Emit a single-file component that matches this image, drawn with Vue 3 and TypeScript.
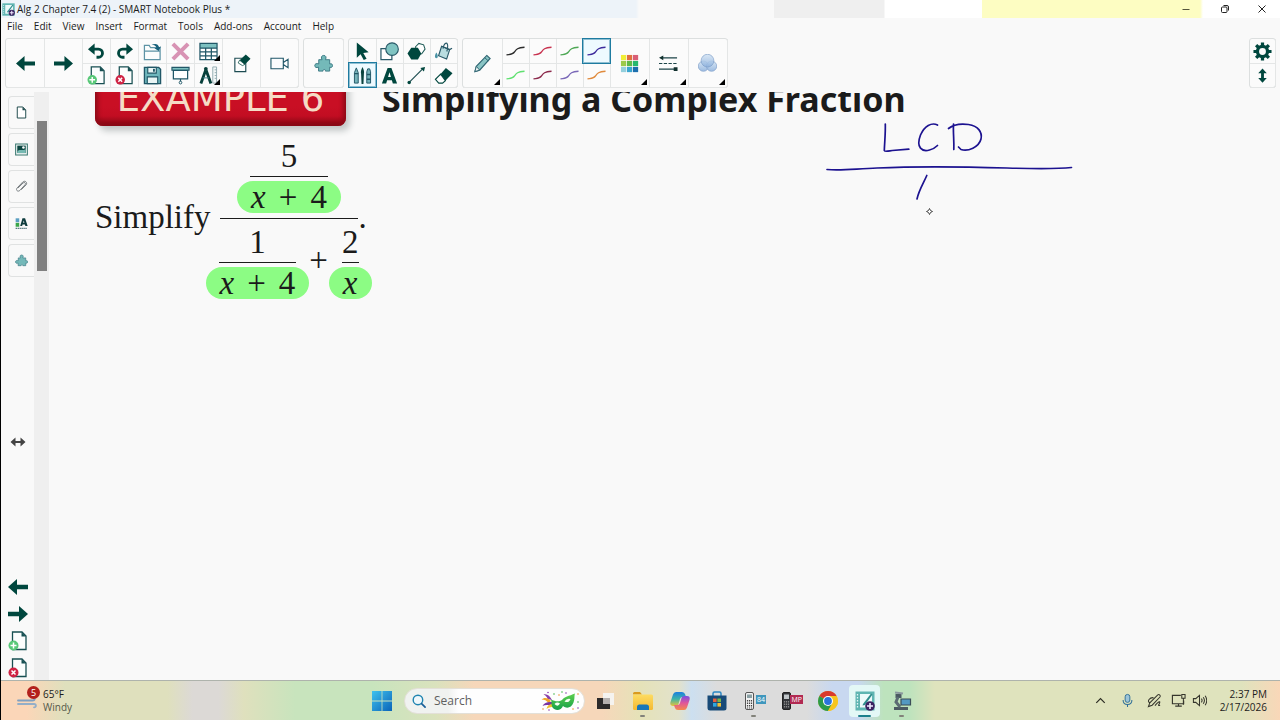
<script setup lang="ts">
import { ref } from 'vue'

interface Tool {
  icon: string
  label: string
  more?: boolean
  active?: boolean
}
interface Line {
  color: string
  label: string
  active?: boolean
}
interface TaskApp {
  icon: string
  label: string
  state?: string
  tag?: string
  tagColor?: string
}

const menus: string[] = ['File', 'Edit', 'View', 'Insert', 'Format', 'Tools', 'Add-ons', 'Account', 'Help']

const pageTools: Tool[] = [
  { icon: 'undo', label: 'Undo' },
  { icon: 'redo', label: 'Redo' },
  { icon: 'open', label: 'Open' },
  { icon: 'delete', label: 'Delete' },
  { icon: 'table', label: 'Insert table', more: true },
  { icon: 'page-add', label: 'Add page' },
  { icon: 'page-remove', label: 'Delete page' },
  { icon: 'save', label: 'Save' },
  { icon: 'screen', label: 'Screen shade' },
  { icon: 'measure', label: 'Measurement tools', more: true },
]

const drawTools: Tool[] = [
  { icon: 'select', label: 'Select' },
  { icon: 'shapes', label: 'Shapes' },
  { icon: 'polygon', label: 'Regular polygons' },
  { icon: 'fill', label: 'Fill' },
  { icon: 'pens', label: 'Pens', active: true },
  { icon: 'text', label: 'Text' },
  { icon: 'line', label: 'Lines' },
  { icon: 'eraser', label: 'Eraser' },
]

const lines: Line[] = [
  { color: '#2b2b2b', label: 'Black pen' },
  { color: '#c8324f', label: 'Red pen' },
  { color: '#4fa856', label: 'Green pen' },
  { color: '#3d2b9c', label: 'Blue pen', active: true },
  { color: '#5fe070', label: 'Light green highlighter' },
  { color: '#8c2a4c', label: 'Maroon pen' },
  { color: '#7a68b8', label: 'Purple pen' },
  { color: '#e08a3c', label: 'Orange pen' },
]

const styleTools: Tool[] = [
  { icon: 'palette', label: 'Color', more: true },
  { icon: 'linestyle', label: 'Line style', more: true },
  { icon: 'opacity', label: 'Transparency', more: true },
]

const sideTabs: Tool[] = [
  { icon: 'tab-page', label: 'Page sorter' },
  { icon: 'tab-gallery', label: 'Gallery' },
  { icon: 'tab-clip', label: 'Attachments' },
  { icon: 'tab-props', label: 'Properties' },
  { icon: 'puzzle', label: 'Add-ons' },
]

const pageNav: Tool[] = [
  { icon: 'prev', label: 'Previous page' },
  { icon: 'next', label: 'Next page' },
  { icon: 'page-add', label: 'Add page' },
  { icon: 'page-remove', label: 'Delete page' },
]

const apps: TaskApp[] = [
  { icon: 'taskview', label: 'Task view' },
  { icon: 'folder', label: 'File Explorer', state: 'open' },
  { icon: 'copilot', label: 'Copilot' },
  { icon: 'store', label: 'Microsoft Store' },
  { icon: 'calc84', label: 'Calculator 84', state: 'open', tag: '84', tagColor: '#3f97bd' },
  { icon: 'calcmp', label: 'Calculator MP', tag: 'MP', tagColor: '#b22a52' },
  { icon: 'chrome', label: 'Chrome' },
  { icon: 'notebook', label: 'SMART Notebook', state: 'front' },
  { icon: 'camera', label: 'Document camera', state: 'open' },
]

const tray: Tool[] = [
  { icon: 'chevron', label: 'Show hidden icons' },
  { icon: 'mic', label: 'Microphone' },
  { icon: 'stylus', label: 'Pen menu' },
  { icon: 'network', label: 'Network' },
  { icon: 'volume', label: 'Volume' },
]

const query = ref<string>('')
</script>

<template>
  <svg class="defs" aria-hidden="true">
    <defs>
      <linearGradient id="g-win" x1="0" y1="0" x2="1" y2="1">
        <stop offset="0" stop-color="#3fc3ee" /><stop offset="1" stop-color="#0a63b8" />
      </linearGradient>
      <linearGradient id="g-folder" x1="0" y1="0" x2="0" y2="1">
        <stop offset="0" stop-color="#fddc62" /><stop offset="1" stop-color="#f4b932" />
      </linearGradient>
      <linearGradient id="g-cop1" x1="0" y1="0" x2="0" y2="1">
        <stop offset="0" stop-color="#1b7fe0" /><stop offset=".5" stop-color="#3cb4a8" /><stop offset="1" stop-color="#e8c23a" />
      </linearGradient>
      <linearGradient id="g-cop2" x1="0" y1="0" x2="0" y2="1">
        <stop offset="0" stop-color="#7a4fe0" /><stop offset=".5" stop-color="#e0569a" /><stop offset="1" stop-color="#f58a4a" />
      </linearGradient>
      <linearGradient id="g-ball" x1="0" y1="0" x2="0" y2="1">
        <stop offset="0" stop-color="#d3e4f4" /><stop offset="1" stop-color="#8cb0dc" />
      </linearGradient>
      <linearGradient id="g-mask" x1="0" y1="0" x2="0" y2="1">
        <stop offset="0" stop-color="#5fd04e" /><stop offset="1" stop-color="#15a04a" />
      </linearGradient>
    </defs>

    <symbol id="prev" viewBox="0 0 20 20"><path d="M0 10 9 2v5.800h11v4.400H9V18z" fill="#00473e" /></symbol>
    <symbol id="next" viewBox="0 0 20 20"><path d="M20 10 11 2v5.800H0v4.400h11V18z" fill="#00473e" /></symbol>
    <symbol id="undo" viewBox="0 0 20 20">
      <path d="M6 7.500h6a4.300 4.300 0 0 1 0 8.600H10" fill="none" stroke="#00473e" stroke-width="3" />
      <path d="M1 7.500 8 1.500v12z" fill="#00473e" />
    </symbol>
    <symbol id="redo" viewBox="0 0 20 20">
      <path d="M14 7.500H8a4.300 4.300 0 0 0 0 8.600h2" fill="none" stroke="#00473e" stroke-width="3" />
      <path d="M19 7.500 12 1.500v12z" fill="#00473e" />
    </symbol>
    <symbol id="open" viewBox="0 0 20 20">
      <path d="M1.500 18.500v-15h5l1.500 2.500h10v12.500zM1.500 9.500h16.500" fill="#fbfdfd" stroke="#5d93a5" stroke-width="1.300" />
      <path d="M9 3c4-2 7-1 8 2.500l2-1-2.500 5-4.500-3 2.200-.4C13.500 4 12 3 9 3z" fill="#17607a" />
    </symbol>
    <symbol id="delete" viewBox="0 0 20 20"><path d="m2 2 16 16m0-16-16 16" stroke="#d893b4" stroke-width="4.200" /></symbol>
    <symbol id="table" viewBox="0 0 20 20">
      <path d="M1 1.500h18v17H1z" fill="#fff" /><path d="M1 1.500h18v5H1z" fill="#7cc0c0" />
      <path d="M1 1.500h18v17H1zM1 6.500h18M1 10.500h18M1 14.500h18M7 6.500v12M13 6.500v12" fill="none" stroke="#215767" stroke-width="1.300" />
    </symbol>
    <symbol id="page-add" viewBox="0 0 20 20">
      <path d="M4.500 1h9.500l4 4v13.500H4.500z" fill="#fbfdfd" stroke="#174f52" stroke-width="1.300" /><path d="M13.500 1v4.500H18z" fill="#174f52" />
      <circle cx="5.500" cy="14.500" r="5" fill="#58c878" /><path d="M5.500 11.500v6m-3-3h6" stroke="#fff" stroke-width="1.500" />
    </symbol>
    <symbol id="page-remove" viewBox="0 0 20 20">
      <path d="M4.500 1h9.500l4 4v13.500H4.500z" fill="#fbfdfd" stroke="#174f52" stroke-width="1.300" /><path d="M13.500 1v4.500H18z" fill="#174f52" />
      <circle cx="5.500" cy="14.500" r="5" fill="#cf2344" /><path d="m3.500 12.500 4 4m0-4-4 4" stroke="#fff" stroke-width="1.500" />
    </symbol>
    <symbol id="save" viewBox="0 0 20 20">
      <path d="M1.500 1.500h15l2 2v15h-17z" fill="#6fb7bd" stroke="#215767" stroke-width="1.400" />
      <path d="M5 1.500h9v6H5zM4.500 11.500h11v7h-11z" fill="#e9f5f5" stroke="#215767" stroke-width="1.200" /><path d="M10.500 3h2v3h-2z" fill="#215767" />
    </symbol>
    <symbol id="screen" viewBox="0 0 20 20">
      <path d="M1 1.500h18v3H1z" fill="#7cc0c0" stroke="#215767" stroke-width="1.200" /><path d="M2.500 4.500h15v9h-15z" fill="#fff" stroke="#215767" stroke-width="1.300" />
      <path d="M10 13.500V17" stroke="#215767" stroke-width="1.300" /><circle cx="10" cy="17.500" r="1.400" fill="#fff" stroke="#215767" />
    </symbol>
    <symbol id="measure" viewBox="0 0 20 20">
      <path d="M7 4.500 2 18.500M7.500 4.500l5 14" stroke="#063f3a" stroke-width="3" /><circle cx="7.200" cy="3" r="2" fill="#063f3a" />
      <path d="M4 12.500h6.500" stroke="#3d7d84" /><path d="M14.500 1h4v17h-4zM16.500 4h2m-2 3h2m-2 3h2m-2 3h2" fill="#f3f7f7" stroke="#8aa3a9" stroke-width=".9" />
    </symbol>
    <symbol id="erase-page" viewBox="0 0 20 20">
      <path d="M3 4.500h11.500v14H3z" fill="#fdfefe" stroke="#1c4b52" stroke-width="1.200" /><path d="m8 6.500 6.500-6 5 4.500-6 6z" fill="#00473e" /><path d="m8 6.500 5.500 4.500-2.500 1.200-4.500-2.800z" fill="#fff" stroke="#00473e" stroke-width=".8" />
    </symbol>
    <symbol id="record" viewBox="0 0 20 20">
      <path d="M1 4.500h13v11H1zM14 9l5-3.500v9L14 11" fill="#fafcfd" stroke="#1f5668" stroke-width="1.200" />
    </symbol>
    <symbol id="puzzle" viewBox="0 0 20 20">
      <path d="M5 6h3.500C7 3.500 8 1.500 10.200 1.500S13.500 3.500 12 6h4.500v4.500c2.500-.8 3 .6 3 1.800s-1 2.400-3 1.600V18H12c.5-2.300-3-2.300-2.500 0H4.800v-4.200C2.500 15 .8 14 .8 12.200s1.700-2.700 4.200-1.700z" fill="#74b9b9" stroke="#3b7984" stroke-width="1" />
    </symbol>
    <symbol id="select" viewBox="0 0 20 20"><path d="m4 .500 12.500 10.200-5.700.8 3.500 6-3 1.500-3.300-6.100L4 16.500z" fill="#00473e" /></symbol>
    <symbol id="shapes" viewBox="0 0 20 20">
      <path d="M1 7h11.500v11.500H1z" fill="#fff" stroke="#2a5a69" stroke-width="1.300" /><circle cx="12.700" cy="7.500" r="6.600" fill="#80c4c2" stroke="#2a5a69" stroke-width="1.200" />
    </symbol>
    <symbol id="polygon" viewBox="0 0 20 20">
      <path d="m9 5 3.500-3.500 5 1.500 1.500 4.500-3.500 5-5 .5z" fill="#fff" stroke="#1d5a56" stroke-width="1.100" /><path d="M4.500 6h7l3.500 6-3.500 6.500h-7L.5 12z" fill="#00473e" />
    </symbol>
    <symbol id="fill" viewBox="0 0 20 20">
      <path d="m8 4.500 8.500 3.500-3.200 10-8.500-3.500z" fill="#b9dde0" stroke="#2a5a69" stroke-width="1.200" /><path d="m8 4.500 8.500 3.500 2.500-1.500M9.500 7c.5-5 3.500-7 4.500-5s.5 4-.5 8" fill="none" stroke="#2a5a69" stroke-width="1.200" />
      <path d="M2.500 11c2 2.800 2 6 0 6s-2-3.200 0-6z" fill="#4a93a5" />
    </symbol>
    <symbol id="pens" viewBox="0 0 20 20">
      <path d="M1.500 7 3.500 2l2 5v11h-4zM14.500 6l1-3h2l1 3v12h-4z" fill="#76b3ba" stroke="#215767" stroke-width="1" />
      <path d="M10 1c1.500 3 2 5 1.500 7l-.5 11H9L8.500 8C8 6 8.500 4 10 1z" fill="#0b443f" /><path d="M14.500 9h4M1.500 8h4M14.500 14h4" stroke="#215767" stroke-width="1.500" />
    </symbol>
    <symbol id="text" viewBox="0 0 20 20"><path fill-rule="evenodd" d="M8 2h4l6 16.500h-4.500l-1-3.500h-5l-1 3.500H2zm.5 9.500h3L10 6.500z" fill="#00473e" /></symbol>
    <symbol id="line" viewBox="0 0 20 20"><path d="M2 17.500 17 2.500" stroke="#1a4a4e" stroke-width="1.200" /><circle cx="2.300" cy="17.300" r="1.800" fill="#00473e" /><path d="m19 1-1.200 4.800L14 2z" fill="#00473e" /></symbol>
    <symbol id="eraser" viewBox="0 0 20 20"><path d="M7 8.500 12.500 2l7 5.500L12 15.500z" fill="#00473e" /><path d="m7 8.500 5 7-3 2.500H5L1.500 14z" fill="#fff" stroke="#00473e" stroke-width="1.200" /></symbol>
    <symbol id="pencil" viewBox="0 0 20 20">
      <path d="m14.500 1.500 3.500 3.200L7 17l-5 1.500L3.500 13z" fill="#8ac5c5" stroke="#2f6572" stroke-width="1.200" /><path d="M3.500 13 7 17l-5 1.500z" fill="#eef6f6" stroke="#2f6572" />
      <path d="m12.500 4 3.500 3.200" stroke="#2f6572" />
    </symbol>
    <symbol id="palette" viewBox="0 0 20 20">
      <path d="M1 1h5.500v5.500H1z" fill="#f1ee35" /><path d="M7.300 1h5.500v5.500H7.300z" fill="#e0703f" /><path d="M13.600 1h5.500v5.500h-5.500z" fill="#d95f76" />
      <path d="M1 7.300h5.500v5.500H1z" fill="#9cc94b" /><path d="M7.300 7.300h5.500v5.500H7.300z" fill="#5fb848" /><path d="M13.600 7.300h5.500v5.500h-5.500z" fill="#27b86e" />
      <path d="M1 13.600h5.500v5.500H1z" fill="#94cfdc" /><path d="M7.300 13.600h5.500v5.500H7.300z" fill="#3aa6d0" /><path d="M13.600 13.600h5.500v5.500h-5.500z" fill="#1c6fae" />
    </symbol>
    <symbol id="linestyle" viewBox="0 0 20 20">
      <path d="M2 4h17M0 16h16" stroke="#1c4448" stroke-width="1.300" /><path d="M0 10h20" stroke="#1c4448" stroke-width="1.300" stroke-dasharray="3.500 1.500" /><path d="m0 4 4.500-2.500v5zM15.500 14h4v4h-4z" fill="#12312f" />
    </symbol>
    <symbol id="opacity" viewBox="0 0 20 20">
      <g stroke="#7f9fc8" stroke-width=".7" fill="url(#g-ball)" fill-opacity=".85"><circle cx="5.700" cy="12.800" r="5.400" /><circle cx="14.300" cy="12.800" r="5.400" /><circle cx="10" cy="7" r="6.700" /></g>
    </symbol>
    <symbol id="gear" viewBox="0 0 20 20">
      <circle cx="10" cy="10" r="5.300" fill="none" stroke="#00473e" stroke-width="3.400" />
      <path d="M10 .5v4m0 11v4M.5 10h4m11 0h4M3.300 3.300l2.500 2.500m8.400 8.400 2.500 2.500m0-13.400-2.500 2.500m-8.400 8.400-2.500 2.500" stroke="#00473e" stroke-width="3.400" />
    </symbol>
    <symbol id="expand" viewBox="0 0 20 20"><path d="m10 2.500 4.500 5h-3v5h3l-4.500 5-4.500-5h3v-5h-3z" fill="#00473e" /></symbol>
    <symbol id="resize" viewBox="0 0 20 20"><path d="m2.500 10 5-4.500v3.500h5V5.500l5 4.500-5 4.500V11h-5v3.500z" fill="#444" /></symbol>
    <symbol id="tab-page" viewBox="0 0 20 20"><path d="M3.500 1.500h8.500l4.500 4.500v12.500h-13z" fill="#fff" stroke="#1f4a4c" stroke-width="1.500" /><path d="M11.500 1.500v5h5z" fill="#1f4a4c" /></symbol>
    <symbol id="tab-gallery" viewBox="0 0 20 20"><path d="M1 1.500h18v17H1z" fill="#f2f8f7" stroke="#39766f" stroke-width="1.600" /><path d="M3.500 4h13v11.500h-13z" fill="#0b4641" /><path d="M3.500 13.500c3-5 6-1 13-4v6h-13z" fill="#76b9b2" /><circle cx="13" cy="7" r="2" fill="#fff" /></symbol>
    <symbol id="tab-clip" viewBox="0 0 20 20"><path d="m4.500 12.500 8-8c2-2 5 .5 3 2.800L7.500 16c-3 3-7-.5-4.200-3.800L12 3c3.500-3 8 1 5 4.500L9.500 15" fill="none" stroke="#767c80" stroke-width="1.500" /></symbol>
    <symbol id="tab-props" viewBox="0 0 20 20">
      <path d="M1 2h5.500v6H1z" fill="#5b9fc2" /><path d="M1 9h5.500v6H1z" fill="#3aa64a" /><path fill-rule="evenodd" d="M11.500 2h4l4 12h-3.500l-.8-2.500h-3.500l-.8 2.500H8zm1 7h2l-1-3.800z" fill="#0e3b3d" />
      <path d="M1 17.500h18" stroke="#4b7077" stroke-width="2" stroke-dasharray="2 1" />
    </symbol>

    <symbol id="windows" viewBox="0 0 20 20"><path d="M0 0h9.600v9.600H0zM10.400 0H20v9.600h-9.600zM0 10.400h9.600V20H0zM10.400 10.400H20V20h-9.600z" fill="url(#g-win)" /></symbol>
    <symbol id="magnifier" viewBox="0 0 20 20"><circle cx="8.500" cy="8.500" r="6.800" fill="#eef7fb" stroke="#1f84b0" stroke-width="2" /><path d="m13.700 13.700 5 5" stroke="#1b5f98" stroke-width="2.400" stroke-linecap="round" /></symbol>
    <symbol id="taskview" viewBox="0 0 20 20"><path d="M7 2h11v12H7z" fill="#f5f3f0" /><path d="M1 7h13v11H1z" fill="#2c2a2a" /><path d="M7 7h7v6H7z" fill="#b5b0ae" /></symbol>
    <symbol id="folder" viewBox="0 0 20 20"><path d="M0 2.500q0-1.500 1.500-1.500H7l2 2.500H0z" fill="#d99a1e" /><path d="M0 3.500h18.500Q20 3.500 20 5v12.500q0 1.500-1.500 1.500h-17Q0 19 0 17.500z" fill="url(#g-folder)" /><path d="M4 19v-3q0-2.500 2.500-2.500h7Q16 13.500 16 16v3z" fill="#1876b8" /></symbol>
    <symbol id="copilot" viewBox="0 0 20 20">
      <path d="M6 1h6q2.500 0 3.200 2.500L16 6h-3.500Q10.500 6 10 8l-1.500 5q-.7 2-2.500 2H3q-3.500 0-2.500-4L3 3.500Q3.800 1 6 1z" fill="url(#g-cop1)" />
      <path d="M14 19H8q-2.500 0-3.200-2.500L4 14h3.500q2 0 2.500-2l1.500-5q.7-2 2.500-2h3q3.500 0 2.500 4L17 16.500Q16.200 19 14 19z" fill="url(#g-cop2)" />
    </symbol>
    <symbol id="store" viewBox="0 0 20 20"><path d="M6 5V2.500Q6 1 7.500 1h5Q14 1 14 2.500V5" fill="none" stroke="#2a86c4" stroke-width="1.500" /><path d="M.5 4.500h19V17q0 2.500-2.500 2.500H3Q.5 19.500.5 17z" fill="#174a78" /><path d="M6 7.500h3.600v3.600H6z" fill="#e7613d" /><path d="M10.400 7.500H14v3.600h-3.600z" fill="#78b84a" /><path d="M6 12h3.600v3.600H6z" fill="#2fa8e0" /><path d="M10.400 12H14v3.600h-3.600z" fill="#f0bf35" /></symbol>
    <symbol id="calc84" viewBox="0 0 20 20"><rect x="1.500" y="1.500" width="8" height="17" rx="1.500" fill="#f2f2f2" stroke="#555" /><path d="M3 3.500h5V7H3z" fill="#8aa0a4" /><path d="M3.500 9v8.500M5.500 9v8.500M7.500 9v8.500" stroke="#444" stroke-width="1.200" stroke-dasharray="1.500 1" /></symbol>
    <symbol id="calcmp" viewBox="0 0 20 20"><rect x="1.500" y="1.500" width="8" height="17" rx="1.500" fill="#333539" stroke="#222" /><path d="M3 3.500h5V8H3z" fill="#bfc5c8" /><path d="M3.500 10v7M5.500 10v7M7.500 10v7" stroke="#888" stroke-width="1.200" stroke-dasharray="1.500 1" /></symbol>
    <symbol id="chrome" viewBox="0 0 20 20">
      <circle cx="10" cy="10" r="10" fill="#f6c51f" /><path d="M10 10 1.340 5A10 10 0 0 1 18.660 5z" fill="#d93a2d" /><path d="M1.340 5A10 10 0 0 0 10 20L14.300 12.500 10 10z" fill="#2c9b4b" /><path d="M10 5h8.660A10 10 0 0 1 10 20l4.300-7.500z" fill="#f6c51f" />
      <circle cx="10" cy="10" r="5" fill="#fff" /><circle cx="10" cy="10" r="3.900" fill="#2b74dc" />
    </symbol>
    <symbol id="notebook" viewBox="0 0 20 20"><path d="M.5.500h19v19H.5z" fill="#5fb5b2" /><path d="M5 3h12v13.500H5z" fill="#edfafa" /><path d="M2.500 3v14" stroke="#e5f6f6" stroke-width="1.300" stroke-dasharray="1.500 1.500" /><path d="m8 13 8-10.500 1.500 1L10 14l-2.500.5z" fill="#2f8d8d" /><circle cx="15" cy="15" r="4.800" fill="#3b2260" /><path d="M15 12v6m-3-3h6" stroke="#f1eaff" stroke-width="1.600" /></symbol>
    <symbol id="camera" viewBox="0 0 20 20"><path d="M3.500 3h6v4h-6zM2 16h14v3H2z" fill="#4b5a62" /><path d="M6 6 4 11l4 5" fill="none" stroke="#5c6c74" stroke-width="3" /><path d="M9 8h9.500v6H9z" fill="#5399c2" stroke="#3b4d57" stroke-width="1.200" /><path d="m3 1.500 8 1" stroke="#8b989e" stroke-width="2" /></symbol>
    <symbol id="mask" viewBox="0 0 40 20">
      <path d="M12 9C10 5 7 2.500 3.500 3.500 6 4.500 7 6 7.500 8z" fill="#8a3fa8" /><path d="M11 10C8 6.500 4 6 1.500 8.500c3 0 5 1 7 3.500z" fill="#f2a52b" /><path d="M12 11c-4-.5-8 .5-9.500 4 3-1.500 6-1.500 9.500.5z" fill="#7a35a0" /><path d="M12 13c-3 .5-5 2-5.500 5 2-1.500 4-2 6.500-2z" fill="#f2c22b" />
      <path d="M11 8.500c4 2 8 2.500 11 .5 2-3 7-4 13-6.500-1 3 0 5-1.500 9-2 5.500-7 6.500-10.500 3.500-2 5-8 5-10.500 1.500-1.500-2.500-.5-5-1.500-8z" fill="url(#g-mask)" /><path d="M14.500 13q2.500-2.500 5.500-.5-2 4-5.500.5zM24.500 10.500q2-3.500 6-2.500-1.500 4.500-6 2.500z" fill="#f4fff2" />
      <g fill="#8d3bb0"><circle cx="8" cy="1.500" r=".8" /><circle cx="26" cy="2" r=".8" /><circle cx="38" cy="17" r=".8" /><circle cx="9" cy="19" r=".8" /></g>
      <g fill="#ef8f2f"><circle cx="19" cy="4" r=".8" /><circle cx="38" cy="3" r=".8" /><circle cx="33" cy="18" r=".8" /><circle cx="3" cy="18" r=".8" /></g>
      <g fill="#46b84d"><circle cx="14" cy="3" r=".8" /><circle cx="38" cy="11" r=".8" /><circle cx="22" cy="1" r=".8" /></g>
    </symbol>
    <symbol id="wind" viewBox="0 0 20 20"><g fill="none" stroke-linecap="round" stroke-width="1.800"><path d="M1 9.500h14.500c3 0 3-4 0-3.500" stroke="#7f9fc0" /><path d="M1 13h16c2.500 0 2.500 3.500 0 3.300" stroke="#93aec8" /></g></symbol>

    <symbol id="chevron" viewBox="0 0 16 16"><path d="m3.500 10.500 4.500-4.500 4.500 4.500" fill="none" stroke="#2b2b22" stroke-width="1.300" /></symbol>
    <symbol id="mic" viewBox="0 0 16 16"><rect x="5.500" y="1.500" width="5" height="8.500" rx="2.500" fill="#9cc4d8" stroke="#2f6f98" /><path d="M3.300 7.500c0 6.500 9.400 6.500 9.400 0M8 12.500V15" fill="none" stroke="#2f6f98" stroke-width="1.100" /></symbol>
    <symbol id="stylus" viewBox="0 0 16 16"><path d="M1.500 14.500 3 10.500l8.500-8.500c1.500-1 3.500.8 2.300 2.300L5.500 13zM3 10.500c-3.500-1.500 0-6 4-5.500M8.500 13.500c3-4 6-5.500 5-3s-2.500 3.500.5 2.500" fill="none" stroke="#35352c" stroke-width="1.100" /></symbol>
    <symbol id="network" viewBox="0 0 16 16"><path d="M10.500 2.500h-9v9h12V8M4.500 14h7M8 11.500V14" fill="none" stroke="#35352c" stroke-width="1.200" /><path d="M11.500 1.500h3.500v4h-3.500zM13.200 5.500v7" fill="none" stroke="#35352c" stroke-width="1.100" /></symbol>
    <symbol id="volume" viewBox="0 0 16 16"><path d="M1.500 6h2.500l4-3.500v11L4 10H1.500zM10 6q1.500 2 0 4M12 4.500q2.500 3.500 0 7M14 3q3.500 5 0 10" fill="none" stroke="#35352c" stroke-width="1.100" /></symbol>
  </svg>

  <div class="window">
    <header class="titlebar">
      <svg class="app-icon"><use href="#notebook" /></svg>
      <span class="title">Alg 2 Chapter 7.4 (2) - SMART Notebook Plus *</span>
      <div class="caption">
        <button type="button" aria-label="Minimize"><svg viewBox="0 0 10 10"><path d="M1.500 5.500h7" stroke="#55553c" stroke-width="1" /></svg></button>
        <button type="button" aria-label="Restore"><svg viewBox="0 0 10 10"><rect x="1.500" y="3" width="5.500" height="5.500" rx="1" fill="none" stroke="#222" /><path d="M3.500 1.500h3.500q1.500 0 1.500 1.500v3.500" fill="none" stroke="#222" /></svg></button>
        <button type="button" aria-label="Close"><svg viewBox="0 0 10 10"><path d="m1.500 1.500 7 7m0-7-7 7" stroke="#222" stroke-width="1" /></svg></button>
      </div>
    </header>

    <nav class="menubar" aria-label="Menu">
      <button v-for="m in menus" :key="m" type="button">{{ m }}</button>
    </nav>

    <div class="toolbar">
      <div class="group pages">
        <button type="button" class="cell tall" aria-label="Previous page"><svg><use href="#prev" /></svg></button>
        <button type="button" class="cell tall" aria-label="Next page"><svg><use href="#next" /></svg></button>
        <div class="pair five">
          <button v-for="t in pageTools" :key="t.icon" type="button" class="cell" :class="{ more: t.more }" :aria-label="t.label">
            <svg><use :href="'#' + t.icon" /></svg>
          </button>
        </div>
        <button type="button" class="cell tall" aria-label="Clear page"><svg><use href="#erase-page" /></svg></button>
        <button type="button" class="cell tall" aria-label="Record"><svg><use href="#record" /></svg></button>
      </div>
      <div class="group">
        <button type="button" class="cell tall" aria-label="Add-ons"><svg><use href="#puzzle" /></svg></button>
      </div>
      <div class="group">
        <div class="pair four">
          <button v-for="t in drawTools" :key="t.icon" type="button" class="cell" :class="{ active: t.active }" :aria-label="t.label">
            <svg><use :href="'#' + t.icon" /></svg>
          </button>
        </div>
      </div>
      <div class="group">
        <button type="button" class="cell tall more" aria-label="Pen type"><svg><use href="#pencil" /></svg></button>
        <div class="pair four">
          <button v-for="l in lines" :key="l.label" type="button" class="cell" :class="{ active: l.active }" :aria-label="l.label">
            <svg viewBox="0 0 20 20"><path d="M.500 13.500C5 13 7 13.500 9 10.500S12 6 19.500 5.500" fill="none" :stroke="l.color" stroke-width="1.400" /></svg>
          </button>
        </div>
        <button v-for="t in styleTools" :key="t.icon" type="button" class="cell tall more" :aria-label="t.label">
          <svg><use :href="'#' + t.icon" /></svg>
        </button>
      </div>
      <div class="group end">
        <div class="pair one">
          <button type="button" class="cell" aria-label="Settings"><svg><use href="#gear" /></svg></button>
          <button type="button" class="cell" aria-label="Move toolbar"><svg><use href="#expand" /></svg></button>
        </div>
      </div>
    </div>

    <main class="work">
      <aside class="side">
        <div class="tabs">
          <button v-for="t in sideTabs" :key="t.icon" type="button" :aria-label="t.label"><svg><use :href="'#' + t.icon" /></svg></button>
        </div>
        <button type="button" class="resize" aria-label="Resize sidebar"><svg><use href="#resize" /></svg></button>
        <div class="page-nav">
          <button v-for="t in pageNav" :key="t.icon" type="button" :aria-label="t.label"><svg><use :href="'#' + t.icon" /></svg></button>
        </div>
      </aside>
      <div class="scroll"><div class="thumb"></div></div>

      <section class="board">
        <div class="badge">EXAMPLE 6</div>
        <h1 class="heading">Simplifying a Complex Fraction</h1>
        <div class="math">
          <span class="word">Simplify</span>
          <span class="frac outer">
            <span class="frac">
              <span class="num">5</span>
              <span class="den"><i>x</i><span>+</span><span>4</span></span>
            </span>
            <span class="bottom">
              <span class="frac">
                <span class="num">1</span>
                <span class="den"><i>x</i><span>+</span><span>4</span></span>
              </span>
              <span class="plus">+</span>
              <span class="frac">
                <span class="num">2</span>
                <span class="den"><i>x</i></span>
              </span>
            </span>
          </span>
          <span class="word">.</span>
        </div>
        <svg class="ink" viewBox="820 120 260 100" role="img" aria-label="LCD">
          <g fill="none" stroke="#1c1290" stroke-width="1.700" stroke-linecap="round" stroke-linejoin="round">
            <path d="M885.300 124c.3 9-.7 18-1 26.500.5 1.500 5 .3 8 0l16.500-1.300" />
            <path d="M937.500 125c-6-3-13 1-17 10-5 13 2 17 9 15q4.500-1 8-4.500" />
            <path d="M953.500 124c-.5 9 .7 16 .3 25.500M948.500 128.500c5-4 13-5 20-4 10 1.500 14 8 12.500 14.500-2 8-13 13-20 10.500l-2.500-2.500" />
            <path d="M827 169.500c15 1.500 30-1 50-1.500 45-2 95-1 130 0 25 .7 50 1 64.500-.5" />
            <path d="M926.800 175.500c-3 7-8 15-9.800 23.500" />
          </g>
          <path d="m929.500 208.500 1 2 2 1-2 1-1 2-1-2-2-1 2-1z" fill="#fff" stroke="#444" stroke-width="1" />
        </svg>
      </section>
    </main>

    <footer class="taskbar">
      <button type="button" class="weather">
        <span class="wind"><svg><use href="#wind" /></svg><b>5</b></span>
        <span class="lines"><span>65°F</span><span class="dim">Windy</span></span>
      </button>
      <div class="apps">
        <button type="button" class="start" aria-label="Start"><svg><use href="#windows" /></svg></button>
        <label class="search">
          <svg class="glass"><use href="#magnifier" /></svg>
          <input v-model="query" type="text" placeholder="Search" aria-label="Search" />
          <svg class="mask"><use href="#mask" /></svg>
        </label>
        <button v-for="a in apps" :key="a.icon" type="button" class="app" :class="a.state" :aria-label="a.label">
          <svg><use :href="'#' + a.icon" /></svg>
          <span v-if="a.tag" class="tag" :style="{ background: a.tagColor }">{{ a.tag }}</span>
        </button>
      </div>
      <div class="tray">
        <button v-for="t in tray" :key="t.icon" type="button" :class="t.icon" :aria-label="t.label"><svg><use :href="'#' + t.icon" /></svg></button>
        <button type="button" class="clock"><span>2:37 PM</span><span>2/17/2026</span></button>
      </div>
    </footer>
  </div>
</template>

<style>
body {
  margin: 0;
}
</style>

<style scoped>
.defs {
  position: absolute;
  width: 0;
  height: 0;
}
.window {
  box-sizing: border-box;
  display: flex;
  flex-direction: column;
  height: 100vh;
  border-left: 1px solid #000;
  background: #f9f9f9;
  color: #1b1b1b;
  font: 10px/13px "Open Sans", "Noto Sans", sans-serif;
  overflow: hidden;
}
button {
  display: flex;
  align-items: center;
  justify-content: center;
  padding: 0;
  border: 0;
  background: none;
  color: inherit;
  font: inherit;
}
.titlebar {
  display: flex;
  align-items: center;
  gap: 2px;
  height: 18px;
  flex: none;
  padding-left: 1px;
  background: linear-gradient(90deg, #edf3f9 0 635px, #f9f9f9 638px 773px, #efefef 773px 883px, #fff 884px 981px, #fdfdc2 981px 1199px, #fff 1202px);
}
.app-icon {
  width: 13px;
  height: 13px;
}
.caption {
  display: flex;
  margin-left: auto;
}
.caption button {
  width: 39px;
  height: 18px;
}
.caption button:last-child {
  width: 36px;
}
.caption svg {
  width: 10px;
  height: 10px;
}
.menubar {
  display: flex;
  gap: 11px;
  height: 16px;
  flex: none;
  padding-left: 6px;
}
.toolbar {
  display: flex;
  align-items: flex-start;
  gap: 4px;
  height: 54px;
  flex: none;
  padding: 4px 4px 0;
}
.group {
  display: flex;
  border: 1px solid #dcdfdf;
  border-radius: 3px;
  background: #fbfbfb;
}
.end {
  margin-left: auto;
}
.pair {
  display: grid;
  grid-auto-rows: 24px;
}
.five {
  grid-template-columns: repeat(5, 28px);
}
.four {
  grid-template-columns: repeat(4, 27px);
}
.one {
  grid-template-columns: 25px;
}
.cell {
  position: relative;
  box-shadow: 1px 0 0 #e4e6e6, 0 1px 0 #e4e6e6;
}
.cell svg {
  width: 19px;
  height: 19px;
}
.tall {
  width: 39px;
  height: 48px;
}
.pages .tall {
  width: 38px;
}
.active {
  z-index: 1;
  background: #eefaff;
  box-shadow: 0 0 0 1px #1e7ba0, inset 0 0 0 1px #8fbfd2;
}
.more::after {
  content: "";
  position: absolute;
  right: 2px;
  bottom: 2px;
  border: 3px solid transparent;
  border-right-color: #000;
  border-bottom-color: #000;
}
.work {
  display: flex;
  flex: 1;
  min-height: 0;
}
.side {
  display: flex;
  flex-direction: column;
  align-items: center;
  width: 33px;
  flex: none;
}
.tabs {
  display: flex;
  flex-direction: column;
  gap: 4px;
  align-self: flex-end;
  padding-top: 4px;
}
.tabs button {
  box-sizing: border-box;
  width: 26px;
  height: 33px;
  border: 1px solid #e0e2e2;
  border-right: 0;
  border-radius: 4px 0 0 4px;
}
.tabs svg {
  width: 13px;
  height: 13px;
}
.resize {
  margin: auto 0;
  padding-top: 30px;
}
.resize svg,
.page-nav svg {
  width: 20px;
  height: 20px;
}
.page-nav {
  display: flex;
  flex-direction: column;
  gap: 7px;
  padding-bottom: 2px;
}
.scroll {
  box-sizing: border-box;
  width: 15px;
  flex: none;
  padding: 29px 2px 0 3px;
  background: #efefef;
}
.thumb {
  height: 150px;
  background: #808080;
}
.board {
  position: relative;
  flex: 1;
  min-width: 0;
  overflow: hidden;
}
.badge {
  position: absolute;
  left: 46px;
  top: -16px;
  width: 251px;
  height: 50px;
  border-radius: 8px;
  background: linear-gradient(#c90f24 60%, #c20d22 80%, #7d0712);
  box-shadow: 4px 5px 6px #c4c8c8, inset 3px 0 4px #8f0b18, inset -3px 0 4px #8f0b18;
  color: #f5dcc6;
  font: 37px/46px "DejaVu Sans", sans-serif;
  text-align: center;
}
.heading {
  position: absolute;
  left: 333px;
  top: -18px;
  margin: 0;
  white-space: nowrap;
  font: bold 34px/50px "Noto Sans", sans-serif;
}
.math {
  position: absolute;
  left: 46px;
  top: 50px;
  display: flex;
  align-items: center;
  font: 33px/32px "Liberation Serif", serif;
}
.word {
  padding-bottom: 8px;
}
.frac {
  display: flex;
  flex-direction: column;
  align-items: center;
}
.num {
  height: 34px;
  line-height: 28px;
}
.den {
  position: relative;
  display: flex;
  gap: 13px;
  padding: 0 14px;
  margin: 5px -14px 0;
  border-radius: 16px;
  background: #8cfc84;
}
.den::before {
  content: "";
  position: absolute;
  left: 13px;
  right: 13px;
  top: -5px;
  height: 1px;
  background: #1b1b1b;
}
.outer {
  margin-left: 9px;
}
.bottom {
  display: flex;
  align-items: center;
  gap: 14px;
  margin-top: 5px;
  padding-top: 9px;
  border-top: 1px solid #1b1b1b;
}
.plus {
  padding-bottom: 8px;
}
.ink {
  position: absolute;
  left: 771px;
  top: 28px;
  width: 260px;
  height: 100px;
}
.taskbar {
  display: grid;
  grid-template-columns: 1fr auto 1fr;
  align-items: center;
  height: 39px;
  flex: none;
  border-top: 1px solid #aeb3ac;
  background: linear-gradient(90deg, #fbd6b8 0 2%, #dfe0bd 5% 13%, #dcd9d6 15% 17%, #dfe0bd 19%, #c8e4bd 23% 29%, #dae2bd 34%, #f6d7ba 37% 47%, #e5e2b8 50%, #e2e2cc 53%, #ccdff0 54%, #dcdcdc 56% 63%, #c8d8f0 65% 67%, #bde3bd 69% 71%, #dfe3bd 73% 97%, #f9d7b8);
}
.weather {
  justify-content: flex-start;
  gap: 6px;
  padding-left: 16px;
  text-align: left;
}
.wind {
  position: relative;
}
.wind svg {
  display: block;
  width: 20px;
  height: 20px;
}
.wind b {
  position: absolute;
  left: 10px;
  top: -5px;
  width: 13px;
  height: 13px;
  border-radius: 50%;
  background: #b3201c;
  color: #fff;
  font-size: 9px;
  font-weight: 400;
  line-height: 13px;
  text-align: center;
}
.lines,
.clock {
  display: flex;
  flex-direction: column;
}
.dim {
  color: #55584a;
}
.apps {
  display: flex;
  align-items: center;
  padding-left: 6px;
}
.start {
  width: 30px;
  height: 38px;
}
.start svg {
  width: 20px;
  height: 20px;
}
.search {
  box-sizing: border-box;
  display: flex;
  align-items: center;
  gap: 8px;
  width: 181px;
  height: 26px;
  margin: 0 2px 0 7px;
  padding: 0 4px 0 7px;
  border: 1px solid #e3e0d8;
  border-radius: 13px;
  background: linear-gradient(90deg, #f0f2f0 24%, #fefefe 30%);
}
.glass {
  width: 14px;
  height: 14px;
  flex: none;
}
.search input {
  flex: 1;
  min-width: 0;
  padding: 0;
  border: 0;
  outline: 0;
  background: none;
  font: 12px/16px "Open Sans", "Noto Sans", sans-serif;
}
.search input::placeholder {
  color: #5f5f5f;
  opacity: 1;
}
.mask {
  width: 40px;
  height: 20px;
  flex: none;
}
.app {
  position: relative;
  width: 37px;
  height: 38px;
}
.app svg {
  z-index: 1;
  width: 20px;
  height: 20px;
}
.tag {
  position: absolute;
  z-index: 2;
  top: 13px;
  right: 6px;
  padding: 0 1px;
  font-size: 7px;
  line-height: 9px;
  color: #fff;
}
.open::after,
.front::after {
  content: "";
  position: absolute;
  bottom: 3px;
  width: 5px;
  height: 2px;
  border-radius: 1px;
  background: #82827a;
}
.front::after {
  width: 13px;
  background: #1c7f8c;
}
.front::before {
  content: "";
  position: absolute;
  inset: 3px;
  border-radius: 4px;
  background: #e3f8f6;
}
.tray {
  display: flex;
  align-items: center;
  justify-content: flex-end;
  padding-right: 13px;
}
.tray svg {
  width: 15px;
  height: 15px;
}
.chevron,
.mic,
.stylus {
  width: 27px;
}
.network,
.volume {
  width: 21px;
}
.clock {
  align-items: flex-end;
  width: 57px;
}
</style>
